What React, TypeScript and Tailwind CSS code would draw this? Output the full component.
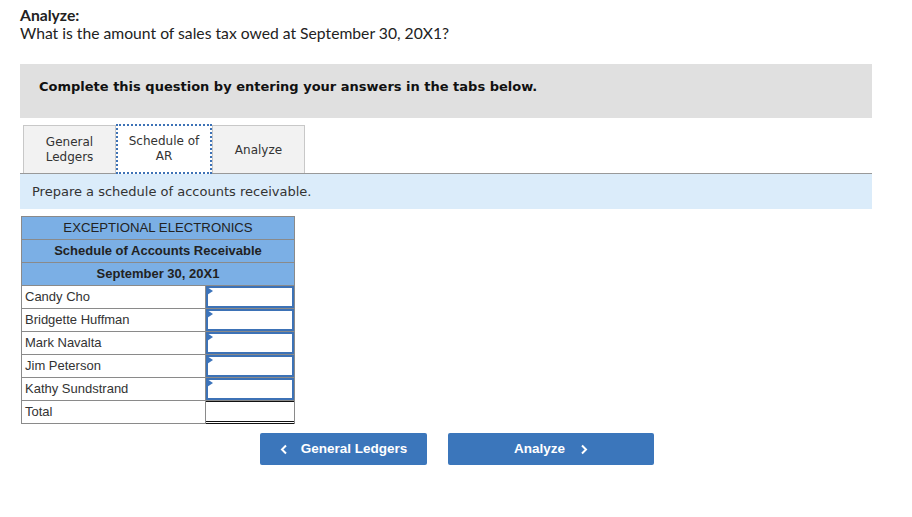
import React from 'react';

const names = ['Candy Cho', 'Bridgette Huffman', 'Mark Navalta', 'Jim Peterson', 'Kathy Sundstrand'];

function Marker() {
  return (
    <span className="absolute left-[1px] top-[1px] w-0 h-0 border-y-[4px] border-y-transparent border-l-[6px] border-l-[#3c74bb]" />
  );
}

function InputRow({ name }: { name: string }) {
  return (
    <div className="flex h-[23px] border-b border-[#8a8a8a]">
      <div className="w-[184px] border-r border-[#8a8a8a] pl-[3px] flex items-center text-[13px] text-[#333]">
        {name}
      </div>
      <div className="flex-1 relative">
        <div className="absolute inset-0 border-2 border-[#3d72b6]" />
        <Marker />
      </div>
    </div>
  );
}

export default function App() {
  return (
    <div className="bg-white w-[912px] h-[517px] pl-[20px] pr-[40px] pt-[6px]" style={{ fontFamily: 'Lato, sans-serif' }}>
      <div className="text-[15.7px] leading-[18px] text-[#222]">
        <div className="font-bold">Analyze:</div>
        <div>What is the amount of sales tax owed at September 30, 20X1?</div>
      </div>

      <div
        className="mt-[22px] h-[54px] bg-[#e0e0e0] flex items-center pl-[19px] pb-[8px] text-[13px] font-bold text-[#111]"
        style={{ fontFamily: '"DejaVu Sans", Verdana, sans-serif' }}
      >
        Complete this question by entering your answers in the tabs below.
      </div>

      <div style={{ fontFamily: '"DejaVu Sans", Verdana, sans-serif' }}>
        <div className="mt-[6px] flex items-end pl-[3px] h-[49px]">
          <div className="w-[93px] h-[48px] bg-[#f2f2f2] border border-[#c8c8c8] border-b-0 flex items-center justify-center text-center text-[12px] leading-[15px] text-[#333]">
            General<br />Ledgers
          </div>
          <div className="w-[96px] h-[50px] bg-white border-2 border-dotted border-[#3d72b6] flex items-center justify-center text-center text-[12px] leading-[15px] text-[#333] relative top-[1px] z-10">
            Schedule of<br />AR
          </div>
          <div className="w-[93px] h-[48px] bg-[#f2f2f2] border border-[#c8c8c8] border-b-0 flex items-center justify-center text-[12px] text-[#333]">
            Analyze
          </div>
        </div>
        <div className="h-[36px] bg-[#dbecfa] border-t border-[#999] flex items-center pl-[12px] text-[13px] text-[#333]">
          Prepare a schedule of accounts receivable.
        </div>
      </div>

      <div className="mt-[7px] ml-[1px] w-[274px] border border-[#8a8a8a] border-b-0" style={{ fontFamily: '"Liberation Sans", Arial, sans-serif' }}>
        <div className="h-[23px] bg-[#7bafe5] border-b border-[#8a8a8a] flex items-center justify-center text-[13.2px] text-[#222]">
          EXCEPTIONAL ELECTRONICS
        </div>
        <div className="h-[23px] bg-[#7bafe5] border-b border-[#8a8a8a] flex items-center justify-center text-[13px] font-bold text-[#222]">
          Schedule of Accounts Receivable
        </div>
        <div className="h-[23px] bg-[#7bafe5] border-b border-[#8a8a8a] flex items-center justify-center text-[13px] font-bold text-[#222]">
          September 30, 20X1
        </div>
        {names.map((n) => (
          <InputRow key={n} name={n} />
        ))}
        <div className="flex h-[23px] border-b border-[#8a8a8a]">
          <div className="w-[184px] border-r border-[#8a8a8a] pl-[3px] flex items-center text-[13px] text-[#333]">
            Total
          </div>
          <div className="flex-1 border-t border-b-[3px] border-double border-[#111] mb-[-1px]" />
        </div>
      </div>

      <div className="mt-[9px] ml-[240px] flex gap-[21px]" style={{ fontFamily: '"Liberation Sans", Arial, sans-serif' }}>
        <button className="w-[167px] h-[32px] rounded-[2px] bg-[#3b76bb] text-white text-[13.5px] font-bold flex items-center justify-center gap-[13px]">
          <svg width="8" height="11" viewBox="0 0 8 11" fill="none" stroke="white" strokeWidth="2"><path d="M6 1.5 2 5.5l4 4" /></svg>
          General Ledgers
        </button>
        <button className="w-[206px] h-[32px] rounded-[2px] bg-[#3b76bb] text-white text-[13.5px] font-bold flex items-center justify-center gap-[15px]">
          Analyze
          <svg width="8" height="11" viewBox="0 0 8 11" fill="none" stroke="white" strokeWidth="2"><path d="M2 1.5l4 4-4 4" /></svg>
        </button>
      </div>
    </div>
  );
}
